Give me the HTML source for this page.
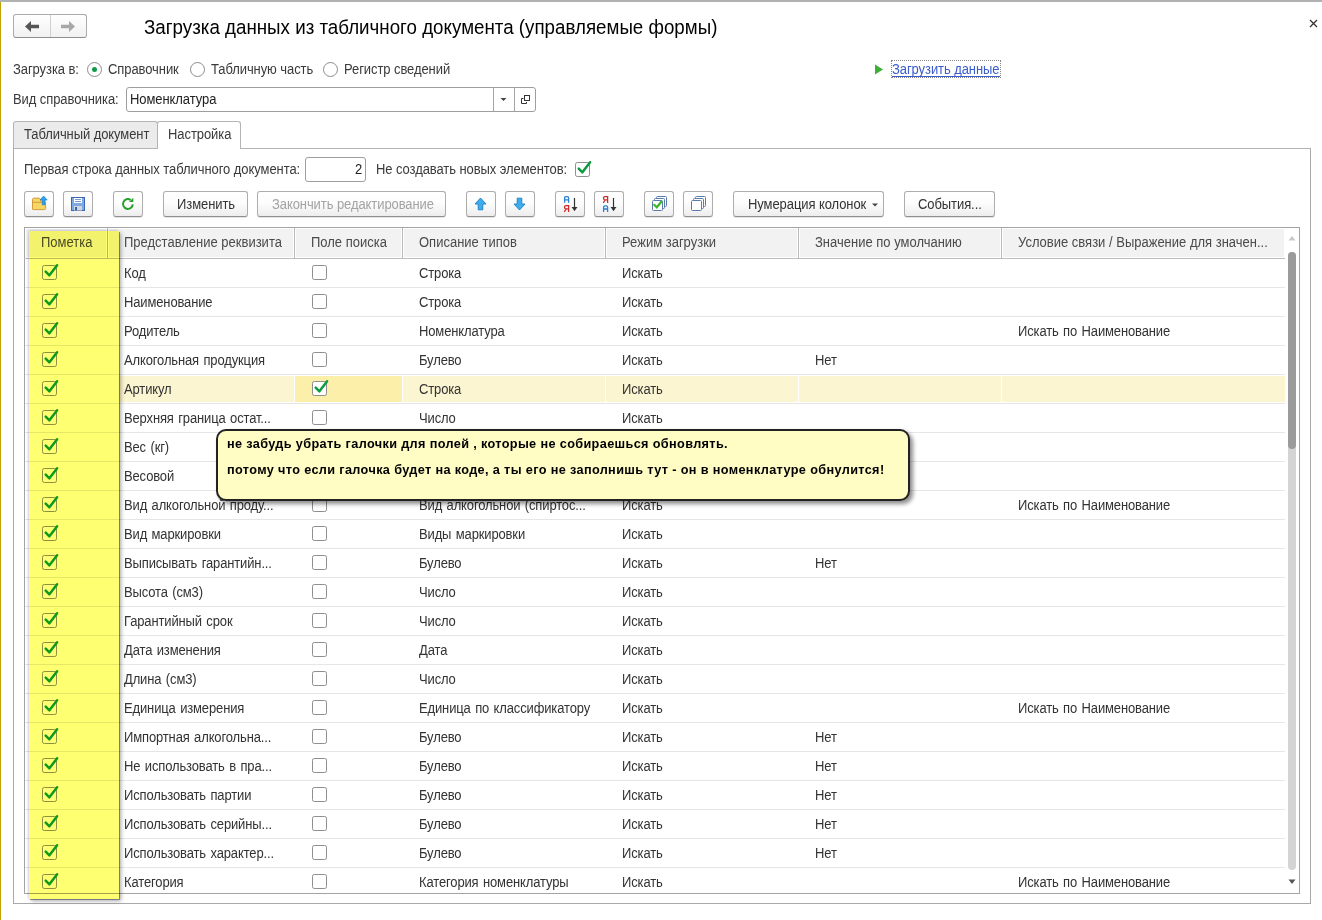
<!DOCTYPE html>
<html><head><meta charset="utf-8">
<style>
html,body{margin:0;padding:0;}
body{width:1322px;height:920px;position:relative;overflow:hidden;background:#fff;font-family:"Liberation Sans",sans-serif;font-size:13px;color:#333;}
.abs{position:absolute;}
.t{position:absolute;white-space:nowrap;line-height:15px;font-size:13px;color:#3a3a3a;letter-spacing:-0.08px;transform:scaleY(1.06);transform-origin:0 11px;}
.tt{letter-spacing:-0.14px;word-spacing:1px;color:#333;}
.hdt{color:#4a4a4a;letter-spacing:0;}
.btn{position:absolute;box-sizing:border-box;height:26px;top:191px;border:1px solid #adadad;border-bottom-color:#8e8e8e;border-radius:3px;background:linear-gradient(#ffffff 0%,#fdfdfd 45%,#ededed 100%);box-shadow:0 1px 0 rgba(0,0,0,0.1);}
.btn .bt{position:absolute;top:5px;white-space:nowrap;line-height:15px;font-size:13px;color:#333;letter-spacing:-0.08px;transform:scaleY(1.06);transform-origin:0 11px;}
.hc{position:absolute;top:228px;height:30px;box-sizing:border-box;background:#f2f2f2;border:1px solid #fff;}
.radio{position:absolute;width:15px;height:15px;box-sizing:border-box;border:1px solid #8c8c8c;border-radius:50%;background:#fff;}
</style></head>
<body>
<!-- top bar & left edge -->
<div class="abs" style="left:0;top:0;width:1322px;height:2px;background:#b0b1b3"></div>
<div class="abs" style="left:0;top:2px;width:1px;height:918px;background:#c0a200"></div>

<!-- nav buttons -->
<div class="abs" style="left:13px;top:14px;width:74px;height:24px;box-sizing:border-box;border:1px solid #ababab;border-bottom-color:#8e8e8e;border-radius:3px;background:linear-gradient(#fff,#f1f1f1);"></div>
<div class="abs" style="left:50px;top:15px;width:1px;height:22px;background:#cfcfcf"></div>
<svg class="abs" style="left:24px;top:20px" width="16" height="13" viewBox="0 0 16 13"><path d="M1 6.5 L7 1 V4.8 H15 V8.2 H7 V12 Z" fill="#555"/></svg>
<svg class="abs" style="left:60px;top:20px" width="16" height="13" viewBox="0 0 16 13"><path d="M15 6.5 L9 1 V4.8 H1 V8.2 H9 V12 Z" fill="#a8a8a8"/></svg>

<!-- title -->
<div class="t" style="left:144px;top:18px;font-size:18.75px;line-height:20px;color:#000;letter-spacing:0">Загрузка данных из табличного документа (управляемые формы)</div>

<!-- close -->
<svg class="abs" style="left:1309px;top:19px" width="9" height="9" viewBox="0 0 9 9"><path d="M1 1 L8 8 M8 1 L1 8" stroke="#333" stroke-width="1.3"/></svg>

<!-- radio line -->
<div class="t" style="left:13px;top:62px">Загрузка в:</div>
<div class="radio" style="left:87px;top:62px"></div>
<div class="abs" style="left:92px;top:67px;width:5px;height:5px;border-radius:50%;background:#109a48"></div>
<div class="t" style="left:108px;top:62px">Справочник</div>
<div class="radio" style="left:190px;top:62px"></div>
<div class="t" style="left:211px;top:62px">Табличную часть</div>
<div class="radio" style="left:323px;top:62px"></div>
<div class="t" style="left:344px;top:62px">Регистр сведений</div>

<!-- load data link -->
<svg class="abs" style="left:874px;top:64px" width="10" height="11" viewBox="0 0 10 11"><path d="M1 0.5 L9 5.5 L1 10.5 Z" fill="#3cb035"/></svg>
<div class="abs" style="left:891px;top:60px;width:110px;height:18px;box-sizing:border-box;border:1px dotted #888"></div>
<div class="t" style="left:892px;top:62px;color:#3a5ccc">Загрузить данные</div>
<div class="abs" style="left:892px;top:76px;width:108px;height:1px;background:#3a5ccc"></div>

<!-- Вид справочника -->
<div class="t" style="left:13px;top:92px">Вид справочника:</div>
<div class="abs" style="left:126px;top:87px;width:410px;height:25px;box-sizing:border-box;border:1px solid #9e9e9e;border-radius:3px;background:#fff"></div>
<div class="abs" style="left:493px;top:88px;width:1px;height:23px;background:#a4a4a4"></div>
<div class="abs" style="left:514px;top:88px;width:1px;height:23px;background:#a4a4a4"></div>
<div class="t" style="left:130px;top:92px;color:#222">Номенклатура</div>
<svg class="abs" style="left:500px;top:97px" width="7" height="5" viewBox="0 0 7 5"><path d="M0.5 1 H6.5 L3.5 4 Z" fill="#444"/></svg>
<svg class="abs" style="left:519px;top:93px" width="12" height="12" viewBox="0 0 12 12"><rect x="5.5" y="2.5" width="5" height="5" fill="none" stroke="#333"/><path d="M4.5 5.5 H2.5 V10.5 H7.5 V9" fill="none" stroke="#333"/></svg>

<!-- tabs -->
<div class="abs" style="left:13px;top:148px;width:1298px;height:756px;box-sizing:border-box;border:1px solid #a9a9a9;border-top-color:#b4b4b4"></div>
<div class="abs" style="left:13px;top:121px;width:145px;height:27px;box-sizing:border-box;border:1px solid #b4b4b4;border-bottom:none;border-radius:3px 3px 0 0;background:#ebebeb"></div>
<div class="abs" style="left:157px;top:121px;width:84px;height:28px;box-sizing:border-box;border:1px solid #b4b4b4;border-bottom:none;border-radius:3px 3px 0 0;background:#fff"></div>
<div class="t" style="left:24px;top:127px">Табличный документ</div>
<div class="t" style="left:168px;top:127px">Настройка</div>

<!-- first row settings -->
<div class="t" style="left:24px;top:162px;letter-spacing:-0.07px">Первая строка данных табличного документа:</div>
<div class="abs" style="left:305px;top:157px;width:61px;height:25px;box-sizing:border-box;border:1px solid #9e9e9e;border-radius:3px;background:#fff"></div>
<div class="t" style="left:355px;top:162px;color:#222">2</div>
<div class="t" style="left:376px;top:162px">Не создавать новых элементов:</div>
<div class="abs" style="left:575px;top:162px;width:15px;height:15px"><svg width="15" height="15" viewBox="0 0 15 15" style="overflow:visible;display:block"><rect x="0.5" y="0.5" width="14" height="14" rx="1.8" fill="#fff" stroke="#8f8f8f"/><path d="M3.7 6.6 L7.4 10.3 L15.1 0.3" fill="none" stroke="#0e9a40" stroke-width="2.5" stroke-linecap="round" stroke-linejoin="round"/></svg></div>

<!-- toolbar -->
<div class="btn" style="left:24px;width:30px"></div>
<svg class="abs" style="left:31px;top:195px" width="18" height="16" viewBox="0 0 18 16"><path d="M1.5 14.3 V4.6 Q1.5 3.1 3 3.1 H7.6 Q9 3.1 9.6 4.6 L10.2 7.2 H14.6 V13.6 Q14.6 14.6 13.6 14.6 H2.3 Q1.5 14.6 1.5 14.3 Z" fill="#f8d662" stroke="#d39b3c"/><path d="M1.5 7.3 H10.5" stroke="#d39b3c"/><path d="M12.6 1 L16.2 5 H14 V9.8 H11.3 V5 H9 Z" fill="#2ea2ea" stroke="#1e7ec6" stroke-width="0.7" stroke-linejoin="round"/></svg>
<div class="btn" style="left:63px;width:30px"></div>
<svg class="abs" style="left:71px;top:197px" width="14" height="14" viewBox="0 0 14 14"><rect x="0.5" y="0.5" width="13" height="13" fill="#7eaae4" stroke="#3b68b0"/><rect x="3" y="1" width="8" height="5" fill="#fff"/><path d="M4 2.5 H10 M4 4.5 H10" stroke="#5a7fc0" stroke-width="0.8"/><rect x="3" y="9" width="8" height="4.5" fill="#cfd6de"/><rect x="4" y="10" width="2" height="3.5" fill="#3864a8"/></svg>
<div class="btn" style="left:113px;width:30px"></div>
<svg class="abs" style="left:120px;top:196px" width="16" height="16" viewBox="0 0 16 16"><path d="M12.8 8.4 A4.9 4.9 0 1 1 10.6 3.9" fill="none" stroke="#23a12a" stroke-width="2"/><path d="M13.3 1.8 V6.1 H9 Z" fill="#23a12a"/></svg>
<div class="btn" style="left:163px;width:85px"><div class="bt" style="left:13px">Изменить</div></div>
<div class="btn" style="left:257px;width:189px"><div class="bt" style="left:14px;color:#a3a3a3">Закончить редактирование</div></div>
<div class="btn" style="left:466px;width:30px"></div>
<svg class="abs" style="left:474px;top:197px" width="13" height="14" viewBox="0 0 13 14"><path d="M6.5 1 L12 7 H8.8 V12.8 H4.2 V7 H1 Z" fill="#3eaced" stroke="#1a7fc4" stroke-width="0.9"/></svg>
<div class="btn" style="left:505px;width:30px"></div>
<svg class="abs" style="left:513px;top:197px" width="13" height="14" viewBox="0 0 13 14"><path d="M6.5 13 L12 7 H8.8 V1.2 H4.2 V7 H1 Z" fill="#3eaced" stroke="#1a7fc4" stroke-width="0.9"/></svg>
<div class="btn" style="left:555px;width:30px"></div>
<svg class="abs" style="left:562px;top:195px" width="18" height="18" viewBox="0 0 18 18"><path d="M2.6 7.8 V3.3 Q2.6 1.6 4 1.6 H5.2 Q6.6 1.6 6.6 3.3 V7.8 M2.6 4.9 H6.6" fill="none" stroke="#2a80d2" stroke-width="1.3"/><path d="M6.6 17 V10.6 H4 Q2.6 10.6 2.6 12 V12.4 Q2.6 13.9 4 13.9 H6.6 M4.3 13.9 L2.2 16.8" fill="none" stroke="#cf2b2b" stroke-width="1.3"/><path d="M12.5 3 V15.5" stroke="#333" stroke-width="1.2"/><path d="M9.5 12 H15.5 L12.5 16 Z" fill="#333"/></svg>
<div class="btn" style="left:594px;width:30px"></div>
<svg class="abs" style="left:601px;top:195px" width="18" height="18" viewBox="0 0 18 18"><path d="M2.6 17 V12.5 Q2.6 10.8 4 10.8 H5.2 Q6.6 10.8 6.6 12.5 V17 M2.6 14 H6.6" fill="none" stroke="#2a80d2" stroke-width="1.3"/><path d="M6.6 8 V1.6 H4 Q2.6 1.6 2.6 3 V3.4 Q2.6 4.9 4 4.9 H6.6 M4.3 4.9 L2.2 7.8" fill="none" stroke="#cf2b2b" stroke-width="1.3"/><path d="M12.5 3 V15.5" stroke="#333" stroke-width="1.2"/><path d="M9.5 12 H15.5 L12.5 16 Z" fill="#333"/></svg>
<div class="btn" style="left:644px;width:30px"></div>
<svg class="abs" style="left:651px;top:195px" width="18" height="17" viewBox="0 0 18 17"><rect x="5.5" y="1.5" width="10" height="10" rx="1" fill="#fff" stroke="#5a7caa"/><rect x="3.5" y="3.5" width="10" height="10" rx="1" fill="#fff" stroke="#5a7caa"/><rect x="1.5" y="5.5" width="10" height="10" rx="1" fill="#fff" stroke="#5a7caa"/><path d="M3.2 9.8 L5.8 12.3 L10.5 6.5" fill="none" stroke="#3fb52a" stroke-width="2.2" stroke-linecap="round"/></svg>
<div class="btn" style="left:683px;width:30px"></div>
<svg class="abs" style="left:690px;top:195px" width="18" height="17" viewBox="0 0 18 17"><rect x="5.5" y="1.5" width="10" height="10" rx="1" fill="#fff" stroke="#5a7caa"/><rect x="3.5" y="3.5" width="10" height="10" rx="1" fill="#fff" stroke="#5a7caa"/><rect x="1.5" y="5.5" width="10" height="10" rx="1" fill="#fff" stroke="#5a7caa"/></svg>
<div class="btn" style="left:733px;width:151px"><div class="bt" style="left:14px">Нумерация колонок</div><svg class="abs" style="left:138px;top:11px" width="6" height="4" viewBox="0 0 6 4"><path d="M0 0.5 H6 L3 3.5 Z" fill="#444"/></svg></div>
<div class="btn" style="left:904px;width:91px"><div class="bt" style="left:13px">События...</div></div>

<!-- table -->
<div class="abs" style="left:24px;top:227px;width:1276px;height:667px;box-sizing:border-box;border:1px solid #a4a4a4;overflow:hidden"></div>
<div class="abs" style="left:25px;top:228px;width:1274px;height:665px;overflow:hidden">
<div class="abs" style="left:-25px;top:-228px;width:1322px;height:920px">
<div class="hc" style="left:25px;width:82px"></div>
<div class="t hdt" style="left:41px;top:235px">Пометка</div>
<div class="hc" style="left:108px;width:186px"></div>
<div class="t hdt" style="left:124px;top:235px">Представление реквизита</div>
<div class="hc" style="left:295px;width:107px"></div>
<div class="t hdt" style="left:311px;top:235px">Поле поиска</div>
<div class="hc" style="left:403px;width:202px"></div>
<div class="t hdt" style="left:419px;top:235px">Описание типов</div>
<div class="hc" style="left:606px;width:192px"></div>
<div class="t hdt" style="left:622px;top:235px">Режим загрузки</div>
<div class="hc" style="left:799px;width:202px"></div>
<div class="t hdt" style="left:815px;top:235px">Значение по умолчанию</div>
<div class="hc" style="left:1002px;width:283px"></div>
<div class="t hdt" style="left:1018px;top:235px">Условие связи / Выражение для значен...</div>
<div class="abs" style="left:107px;top:228px;width:1px;height:30px;background:#b9b9b9"></div>
<div class="abs" style="left:294px;top:228px;width:1px;height:30px;background:#b9b9b9"></div>
<div class="abs" style="left:402px;top:228px;width:1px;height:30px;background:#b9b9b9"></div>
<div class="abs" style="left:605px;top:228px;width:1px;height:30px;background:#b9b9b9"></div>
<div class="abs" style="left:798px;top:228px;width:1px;height:30px;background:#b9b9b9"></div>
<div class="abs" style="left:1001px;top:228px;width:1px;height:30px;background:#b9b9b9"></div>
<div class="abs" style="left:25px;top:287px;width:1260px;height:1px;background:#e6e6e6"></div>
<div class="abs" style="left:42px;top:265px;width:15px;height:15px"><svg width="15" height="15" viewBox="0 0 15 15" style="overflow:visible;display:block"><rect x="0.5" y="0.5" width="14" height="14" rx="1.8" fill="#fff" stroke="#8f8f8f"/><path d="M3.7 6.6 L7.4 10.3 L15.1 0.3" fill="none" stroke="#0e9a40" stroke-width="2.5" stroke-linecap="round" stroke-linejoin="round"/></svg></div>
<div class="abs" style="left:312px;top:265px;width:15px;height:15px"><svg width="15" height="15" viewBox="0 0 15 15" style="display:block"><rect x="0.5" y="0.5" width="14" height="14" rx="1.8" fill="#fff" stroke="#8f8f8f"/></svg></div>
<div class="t tt" style="left:124px;top:266px">Код</div>
<div class="t tt" style="left:419px;top:266px">Строка</div>
<div class="t tt" style="left:622px;top:266px">Искать</div>
<div class="abs" style="left:25px;top:316px;width:1260px;height:1px;background:#e6e6e6"></div>
<div class="abs" style="left:42px;top:294px;width:15px;height:15px"><svg width="15" height="15" viewBox="0 0 15 15" style="overflow:visible;display:block"><rect x="0.5" y="0.5" width="14" height="14" rx="1.8" fill="#fff" stroke="#8f8f8f"/><path d="M3.7 6.6 L7.4 10.3 L15.1 0.3" fill="none" stroke="#0e9a40" stroke-width="2.5" stroke-linecap="round" stroke-linejoin="round"/></svg></div>
<div class="abs" style="left:312px;top:294px;width:15px;height:15px"><svg width="15" height="15" viewBox="0 0 15 15" style="display:block"><rect x="0.5" y="0.5" width="14" height="14" rx="1.8" fill="#fff" stroke="#8f8f8f"/></svg></div>
<div class="t tt" style="left:124px;top:295px">Наименование</div>
<div class="t tt" style="left:419px;top:295px">Строка</div>
<div class="t tt" style="left:622px;top:295px">Искать</div>
<div class="abs" style="left:25px;top:345px;width:1260px;height:1px;background:#e6e6e6"></div>
<div class="abs" style="left:42px;top:323px;width:15px;height:15px"><svg width="15" height="15" viewBox="0 0 15 15" style="overflow:visible;display:block"><rect x="0.5" y="0.5" width="14" height="14" rx="1.8" fill="#fff" stroke="#8f8f8f"/><path d="M3.7 6.6 L7.4 10.3 L15.1 0.3" fill="none" stroke="#0e9a40" stroke-width="2.5" stroke-linecap="round" stroke-linejoin="round"/></svg></div>
<div class="abs" style="left:312px;top:323px;width:15px;height:15px"><svg width="15" height="15" viewBox="0 0 15 15" style="display:block"><rect x="0.5" y="0.5" width="14" height="14" rx="1.8" fill="#fff" stroke="#8f8f8f"/></svg></div>
<div class="t tt" style="left:124px;top:324px">Родитель</div>
<div class="t tt" style="left:419px;top:324px">Номенклатура</div>
<div class="t tt" style="left:622px;top:324px">Искать</div>
<div class="t tt" style="left:1018px;top:324px">Искать по Наименование</div>
<div class="abs" style="left:25px;top:374px;width:1260px;height:1px;background:#e6e6e6"></div>
<div class="abs" style="left:42px;top:352px;width:15px;height:15px"><svg width="15" height="15" viewBox="0 0 15 15" style="overflow:visible;display:block"><rect x="0.5" y="0.5" width="14" height="14" rx="1.8" fill="#fff" stroke="#8f8f8f"/><path d="M3.7 6.6 L7.4 10.3 L15.1 0.3" fill="none" stroke="#0e9a40" stroke-width="2.5" stroke-linecap="round" stroke-linejoin="round"/></svg></div>
<div class="abs" style="left:312px;top:352px;width:15px;height:15px"><svg width="15" height="15" viewBox="0 0 15 15" style="display:block"><rect x="0.5" y="0.5" width="14" height="14" rx="1.8" fill="#fff" stroke="#8f8f8f"/></svg></div>
<div class="t tt" style="left:124px;top:353px">Алкогольная продукция</div>
<div class="t tt" style="left:419px;top:353px">Булево</div>
<div class="t tt" style="left:622px;top:353px">Искать</div>
<div class="t tt" style="left:815px;top:353px">Нет</div>
<div class="abs" style="left:119px;top:376px;width:175px;height:26px;background:#fcf5d1"></div>
<div class="abs" style="left:295px;top:376px;width:107px;height:26px;background:#fcefa9"></div>
<div class="abs" style="left:403px;top:376px;width:202px;height:26px;background:#fcf5d1"></div>
<div class="abs" style="left:606px;top:376px;width:192px;height:26px;background:#fcf5d1"></div>
<div class="abs" style="left:799px;top:376px;width:202px;height:26px;background:#fcf5d1"></div>
<div class="abs" style="left:1002px;top:376px;width:283px;height:26px;background:#fcf5d1"></div>
<div class="abs" style="left:25px;top:403px;width:1260px;height:1px;background:#e6e6e6"></div>
<div class="abs" style="left:42px;top:381px;width:15px;height:15px"><svg width="15" height="15" viewBox="0 0 15 15" style="overflow:visible;display:block"><rect x="0.5" y="0.5" width="14" height="14" rx="1.8" fill="#fff" stroke="#8f8f8f"/><path d="M3.7 6.6 L7.4 10.3 L15.1 0.3" fill="none" stroke="#0e9a40" stroke-width="2.5" stroke-linecap="round" stroke-linejoin="round"/></svg></div>
<div class="abs" style="left:312px;top:381px;width:15px;height:15px"><svg width="15" height="15" viewBox="0 0 15 15" style="overflow:visible;display:block"><rect x="0.5" y="0.5" width="14" height="14" rx="1.8" fill="#fff" stroke="#8f8f8f"/><path d="M3.7 6.6 L7.4 10.3 L15.1 0.3" fill="none" stroke="#0e9a40" stroke-width="2.5" stroke-linecap="round" stroke-linejoin="round"/></svg></div>
<div class="t tt" style="left:124px;top:382px">Артикул</div>
<div class="t tt" style="left:419px;top:382px">Строка</div>
<div class="t tt" style="left:622px;top:382px">Искать</div>
<div class="abs" style="left:25px;top:432px;width:1260px;height:1px;background:#e6e6e6"></div>
<div class="abs" style="left:42px;top:410px;width:15px;height:15px"><svg width="15" height="15" viewBox="0 0 15 15" style="overflow:visible;display:block"><rect x="0.5" y="0.5" width="14" height="14" rx="1.8" fill="#fff" stroke="#8f8f8f"/><path d="M3.7 6.6 L7.4 10.3 L15.1 0.3" fill="none" stroke="#0e9a40" stroke-width="2.5" stroke-linecap="round" stroke-linejoin="round"/></svg></div>
<div class="abs" style="left:312px;top:410px;width:15px;height:15px"><svg width="15" height="15" viewBox="0 0 15 15" style="display:block"><rect x="0.5" y="0.5" width="14" height="14" rx="1.8" fill="#fff" stroke="#8f8f8f"/></svg></div>
<div class="t tt" style="left:124px;top:411px">Верхняя граница остат...</div>
<div class="t tt" style="left:419px;top:411px">Число</div>
<div class="t tt" style="left:622px;top:411px">Искать</div>
<div class="abs" style="left:25px;top:461px;width:1260px;height:1px;background:#e6e6e6"></div>
<div class="abs" style="left:42px;top:439px;width:15px;height:15px"><svg width="15" height="15" viewBox="0 0 15 15" style="overflow:visible;display:block"><rect x="0.5" y="0.5" width="14" height="14" rx="1.8" fill="#fff" stroke="#8f8f8f"/><path d="M3.7 6.6 L7.4 10.3 L15.1 0.3" fill="none" stroke="#0e9a40" stroke-width="2.5" stroke-linecap="round" stroke-linejoin="round"/></svg></div>
<div class="abs" style="left:312px;top:439px;width:15px;height:15px"><svg width="15" height="15" viewBox="0 0 15 15" style="display:block"><rect x="0.5" y="0.5" width="14" height="14" rx="1.8" fill="#fff" stroke="#8f8f8f"/></svg></div>
<div class="t tt" style="left:124px;top:440px">Вес (кг)</div>
<div class="t tt" style="left:419px;top:440px">Число</div>
<div class="t tt" style="left:622px;top:440px">Искать</div>
<div class="abs" style="left:25px;top:490px;width:1260px;height:1px;background:#e6e6e6"></div>
<div class="abs" style="left:42px;top:468px;width:15px;height:15px"><svg width="15" height="15" viewBox="0 0 15 15" style="overflow:visible;display:block"><rect x="0.5" y="0.5" width="14" height="14" rx="1.8" fill="#fff" stroke="#8f8f8f"/><path d="M3.7 6.6 L7.4 10.3 L15.1 0.3" fill="none" stroke="#0e9a40" stroke-width="2.5" stroke-linecap="round" stroke-linejoin="round"/></svg></div>
<div class="abs" style="left:312px;top:468px;width:15px;height:15px"><svg width="15" height="15" viewBox="0 0 15 15" style="display:block"><rect x="0.5" y="0.5" width="14" height="14" rx="1.8" fill="#fff" stroke="#8f8f8f"/></svg></div>
<div class="t tt" style="left:124px;top:469px">Весовой</div>
<div class="t tt" style="left:419px;top:469px">Булево</div>
<div class="t tt" style="left:622px;top:469px">Искать</div>
<div class="t tt" style="left:815px;top:469px">Нет</div>
<div class="abs" style="left:25px;top:519px;width:1260px;height:1px;background:#e6e6e6"></div>
<div class="abs" style="left:42px;top:497px;width:15px;height:15px"><svg width="15" height="15" viewBox="0 0 15 15" style="overflow:visible;display:block"><rect x="0.5" y="0.5" width="14" height="14" rx="1.8" fill="#fff" stroke="#8f8f8f"/><path d="M3.7 6.6 L7.4 10.3 L15.1 0.3" fill="none" stroke="#0e9a40" stroke-width="2.5" stroke-linecap="round" stroke-linejoin="round"/></svg></div>
<div class="abs" style="left:312px;top:497px;width:15px;height:15px"><svg width="15" height="15" viewBox="0 0 15 15" style="display:block"><rect x="0.5" y="0.5" width="14" height="14" rx="1.8" fill="#fff" stroke="#8f8f8f"/></svg></div>
<div class="t tt" style="left:124px;top:498px">Вид алкогольной проду...</div>
<div class="t tt" style="left:419px;top:498px">Вид алкогольной (спиртос...</div>
<div class="t tt" style="left:622px;top:498px">Искать</div>
<div class="t tt" style="left:1018px;top:498px">Искать по Наименование</div>
<div class="abs" style="left:25px;top:548px;width:1260px;height:1px;background:#e6e6e6"></div>
<div class="abs" style="left:42px;top:526px;width:15px;height:15px"><svg width="15" height="15" viewBox="0 0 15 15" style="overflow:visible;display:block"><rect x="0.5" y="0.5" width="14" height="14" rx="1.8" fill="#fff" stroke="#8f8f8f"/><path d="M3.7 6.6 L7.4 10.3 L15.1 0.3" fill="none" stroke="#0e9a40" stroke-width="2.5" stroke-linecap="round" stroke-linejoin="round"/></svg></div>
<div class="abs" style="left:312px;top:526px;width:15px;height:15px"><svg width="15" height="15" viewBox="0 0 15 15" style="display:block"><rect x="0.5" y="0.5" width="14" height="14" rx="1.8" fill="#fff" stroke="#8f8f8f"/></svg></div>
<div class="t tt" style="left:124px;top:527px">Вид маркировки</div>
<div class="t tt" style="left:419px;top:527px">Виды маркировки</div>
<div class="t tt" style="left:622px;top:527px">Искать</div>
<div class="abs" style="left:25px;top:577px;width:1260px;height:1px;background:#e6e6e6"></div>
<div class="abs" style="left:42px;top:555px;width:15px;height:15px"><svg width="15" height="15" viewBox="0 0 15 15" style="overflow:visible;display:block"><rect x="0.5" y="0.5" width="14" height="14" rx="1.8" fill="#fff" stroke="#8f8f8f"/><path d="M3.7 6.6 L7.4 10.3 L15.1 0.3" fill="none" stroke="#0e9a40" stroke-width="2.5" stroke-linecap="round" stroke-linejoin="round"/></svg></div>
<div class="abs" style="left:312px;top:555px;width:15px;height:15px"><svg width="15" height="15" viewBox="0 0 15 15" style="display:block"><rect x="0.5" y="0.5" width="14" height="14" rx="1.8" fill="#fff" stroke="#8f8f8f"/></svg></div>
<div class="t tt" style="left:124px;top:556px">Выписывать гарантийн...</div>
<div class="t tt" style="left:419px;top:556px">Булево</div>
<div class="t tt" style="left:622px;top:556px">Искать</div>
<div class="t tt" style="left:815px;top:556px">Нет</div>
<div class="abs" style="left:25px;top:606px;width:1260px;height:1px;background:#e6e6e6"></div>
<div class="abs" style="left:42px;top:584px;width:15px;height:15px"><svg width="15" height="15" viewBox="0 0 15 15" style="overflow:visible;display:block"><rect x="0.5" y="0.5" width="14" height="14" rx="1.8" fill="#fff" stroke="#8f8f8f"/><path d="M3.7 6.6 L7.4 10.3 L15.1 0.3" fill="none" stroke="#0e9a40" stroke-width="2.5" stroke-linecap="round" stroke-linejoin="round"/></svg></div>
<div class="abs" style="left:312px;top:584px;width:15px;height:15px"><svg width="15" height="15" viewBox="0 0 15 15" style="display:block"><rect x="0.5" y="0.5" width="14" height="14" rx="1.8" fill="#fff" stroke="#8f8f8f"/></svg></div>
<div class="t tt" style="left:124px;top:585px">Высота (см3)</div>
<div class="t tt" style="left:419px;top:585px">Число</div>
<div class="t tt" style="left:622px;top:585px">Искать</div>
<div class="abs" style="left:25px;top:635px;width:1260px;height:1px;background:#e6e6e6"></div>
<div class="abs" style="left:42px;top:613px;width:15px;height:15px"><svg width="15" height="15" viewBox="0 0 15 15" style="overflow:visible;display:block"><rect x="0.5" y="0.5" width="14" height="14" rx="1.8" fill="#fff" stroke="#8f8f8f"/><path d="M3.7 6.6 L7.4 10.3 L15.1 0.3" fill="none" stroke="#0e9a40" stroke-width="2.5" stroke-linecap="round" stroke-linejoin="round"/></svg></div>
<div class="abs" style="left:312px;top:613px;width:15px;height:15px"><svg width="15" height="15" viewBox="0 0 15 15" style="display:block"><rect x="0.5" y="0.5" width="14" height="14" rx="1.8" fill="#fff" stroke="#8f8f8f"/></svg></div>
<div class="t tt" style="left:124px;top:614px">Гарантийный срок</div>
<div class="t tt" style="left:419px;top:614px">Число</div>
<div class="t tt" style="left:622px;top:614px">Искать</div>
<div class="abs" style="left:25px;top:664px;width:1260px;height:1px;background:#e6e6e6"></div>
<div class="abs" style="left:42px;top:642px;width:15px;height:15px"><svg width="15" height="15" viewBox="0 0 15 15" style="overflow:visible;display:block"><rect x="0.5" y="0.5" width="14" height="14" rx="1.8" fill="#fff" stroke="#8f8f8f"/><path d="M3.7 6.6 L7.4 10.3 L15.1 0.3" fill="none" stroke="#0e9a40" stroke-width="2.5" stroke-linecap="round" stroke-linejoin="round"/></svg></div>
<div class="abs" style="left:312px;top:642px;width:15px;height:15px"><svg width="15" height="15" viewBox="0 0 15 15" style="display:block"><rect x="0.5" y="0.5" width="14" height="14" rx="1.8" fill="#fff" stroke="#8f8f8f"/></svg></div>
<div class="t tt" style="left:124px;top:643px">Дата изменения</div>
<div class="t tt" style="left:419px;top:643px">Дата</div>
<div class="t tt" style="left:622px;top:643px">Искать</div>
<div class="abs" style="left:25px;top:693px;width:1260px;height:1px;background:#e6e6e6"></div>
<div class="abs" style="left:42px;top:671px;width:15px;height:15px"><svg width="15" height="15" viewBox="0 0 15 15" style="overflow:visible;display:block"><rect x="0.5" y="0.5" width="14" height="14" rx="1.8" fill="#fff" stroke="#8f8f8f"/><path d="M3.7 6.6 L7.4 10.3 L15.1 0.3" fill="none" stroke="#0e9a40" stroke-width="2.5" stroke-linecap="round" stroke-linejoin="round"/></svg></div>
<div class="abs" style="left:312px;top:671px;width:15px;height:15px"><svg width="15" height="15" viewBox="0 0 15 15" style="display:block"><rect x="0.5" y="0.5" width="14" height="14" rx="1.8" fill="#fff" stroke="#8f8f8f"/></svg></div>
<div class="t tt" style="left:124px;top:672px">Длина (см3)</div>
<div class="t tt" style="left:419px;top:672px">Число</div>
<div class="t tt" style="left:622px;top:672px">Искать</div>
<div class="abs" style="left:25px;top:722px;width:1260px;height:1px;background:#e6e6e6"></div>
<div class="abs" style="left:42px;top:700px;width:15px;height:15px"><svg width="15" height="15" viewBox="0 0 15 15" style="overflow:visible;display:block"><rect x="0.5" y="0.5" width="14" height="14" rx="1.8" fill="#fff" stroke="#8f8f8f"/><path d="M3.7 6.6 L7.4 10.3 L15.1 0.3" fill="none" stroke="#0e9a40" stroke-width="2.5" stroke-linecap="round" stroke-linejoin="round"/></svg></div>
<div class="abs" style="left:312px;top:700px;width:15px;height:15px"><svg width="15" height="15" viewBox="0 0 15 15" style="display:block"><rect x="0.5" y="0.5" width="14" height="14" rx="1.8" fill="#fff" stroke="#8f8f8f"/></svg></div>
<div class="t tt" style="left:124px;top:701px">Единица измерения</div>
<div class="t tt" style="left:419px;top:701px">Единица по классификатору</div>
<div class="t tt" style="left:622px;top:701px">Искать</div>
<div class="t tt" style="left:1018px;top:701px">Искать по Наименование</div>
<div class="abs" style="left:25px;top:751px;width:1260px;height:1px;background:#e6e6e6"></div>
<div class="abs" style="left:42px;top:729px;width:15px;height:15px"><svg width="15" height="15" viewBox="0 0 15 15" style="overflow:visible;display:block"><rect x="0.5" y="0.5" width="14" height="14" rx="1.8" fill="#fff" stroke="#8f8f8f"/><path d="M3.7 6.6 L7.4 10.3 L15.1 0.3" fill="none" stroke="#0e9a40" stroke-width="2.5" stroke-linecap="round" stroke-linejoin="round"/></svg></div>
<div class="abs" style="left:312px;top:729px;width:15px;height:15px"><svg width="15" height="15" viewBox="0 0 15 15" style="display:block"><rect x="0.5" y="0.5" width="14" height="14" rx="1.8" fill="#fff" stroke="#8f8f8f"/></svg></div>
<div class="t tt" style="left:124px;top:730px">Импортная алкогольна...</div>
<div class="t tt" style="left:419px;top:730px">Булево</div>
<div class="t tt" style="left:622px;top:730px">Искать</div>
<div class="t tt" style="left:815px;top:730px">Нет</div>
<div class="abs" style="left:25px;top:780px;width:1260px;height:1px;background:#e6e6e6"></div>
<div class="abs" style="left:42px;top:758px;width:15px;height:15px"><svg width="15" height="15" viewBox="0 0 15 15" style="overflow:visible;display:block"><rect x="0.5" y="0.5" width="14" height="14" rx="1.8" fill="#fff" stroke="#8f8f8f"/><path d="M3.7 6.6 L7.4 10.3 L15.1 0.3" fill="none" stroke="#0e9a40" stroke-width="2.5" stroke-linecap="round" stroke-linejoin="round"/></svg></div>
<div class="abs" style="left:312px;top:758px;width:15px;height:15px"><svg width="15" height="15" viewBox="0 0 15 15" style="display:block"><rect x="0.5" y="0.5" width="14" height="14" rx="1.8" fill="#fff" stroke="#8f8f8f"/></svg></div>
<div class="t tt" style="left:124px;top:759px">Не использовать в пра...</div>
<div class="t tt" style="left:419px;top:759px">Булево</div>
<div class="t tt" style="left:622px;top:759px">Искать</div>
<div class="t tt" style="left:815px;top:759px">Нет</div>
<div class="abs" style="left:25px;top:809px;width:1260px;height:1px;background:#e6e6e6"></div>
<div class="abs" style="left:42px;top:787px;width:15px;height:15px"><svg width="15" height="15" viewBox="0 0 15 15" style="overflow:visible;display:block"><rect x="0.5" y="0.5" width="14" height="14" rx="1.8" fill="#fff" stroke="#8f8f8f"/><path d="M3.7 6.6 L7.4 10.3 L15.1 0.3" fill="none" stroke="#0e9a40" stroke-width="2.5" stroke-linecap="round" stroke-linejoin="round"/></svg></div>
<div class="abs" style="left:312px;top:787px;width:15px;height:15px"><svg width="15" height="15" viewBox="0 0 15 15" style="display:block"><rect x="0.5" y="0.5" width="14" height="14" rx="1.8" fill="#fff" stroke="#8f8f8f"/></svg></div>
<div class="t tt" style="left:124px;top:788px">Использовать партии</div>
<div class="t tt" style="left:419px;top:788px">Булево</div>
<div class="t tt" style="left:622px;top:788px">Искать</div>
<div class="t tt" style="left:815px;top:788px">Нет</div>
<div class="abs" style="left:25px;top:838px;width:1260px;height:1px;background:#e6e6e6"></div>
<div class="abs" style="left:42px;top:816px;width:15px;height:15px"><svg width="15" height="15" viewBox="0 0 15 15" style="overflow:visible;display:block"><rect x="0.5" y="0.5" width="14" height="14" rx="1.8" fill="#fff" stroke="#8f8f8f"/><path d="M3.7 6.6 L7.4 10.3 L15.1 0.3" fill="none" stroke="#0e9a40" stroke-width="2.5" stroke-linecap="round" stroke-linejoin="round"/></svg></div>
<div class="abs" style="left:312px;top:816px;width:15px;height:15px"><svg width="15" height="15" viewBox="0 0 15 15" style="display:block"><rect x="0.5" y="0.5" width="14" height="14" rx="1.8" fill="#fff" stroke="#8f8f8f"/></svg></div>
<div class="t tt" style="left:124px;top:817px">Использовать серийны...</div>
<div class="t tt" style="left:419px;top:817px">Булево</div>
<div class="t tt" style="left:622px;top:817px">Искать</div>
<div class="t tt" style="left:815px;top:817px">Нет</div>
<div class="abs" style="left:25px;top:867px;width:1260px;height:1px;background:#e6e6e6"></div>
<div class="abs" style="left:42px;top:845px;width:15px;height:15px"><svg width="15" height="15" viewBox="0 0 15 15" style="overflow:visible;display:block"><rect x="0.5" y="0.5" width="14" height="14" rx="1.8" fill="#fff" stroke="#8f8f8f"/><path d="M3.7 6.6 L7.4 10.3 L15.1 0.3" fill="none" stroke="#0e9a40" stroke-width="2.5" stroke-linecap="round" stroke-linejoin="round"/></svg></div>
<div class="abs" style="left:312px;top:845px;width:15px;height:15px"><svg width="15" height="15" viewBox="0 0 15 15" style="display:block"><rect x="0.5" y="0.5" width="14" height="14" rx="1.8" fill="#fff" stroke="#8f8f8f"/></svg></div>
<div class="t tt" style="left:124px;top:846px">Использовать характер...</div>
<div class="t tt" style="left:419px;top:846px">Булево</div>
<div class="t tt" style="left:622px;top:846px">Искать</div>
<div class="t tt" style="left:815px;top:846px">Нет</div>
<div class="abs" style="left:25px;top:896px;width:1260px;height:1px;background:#e6e6e6"></div>
<div class="abs" style="left:42px;top:874px;width:15px;height:15px"><svg width="15" height="15" viewBox="0 0 15 15" style="overflow:visible;display:block"><rect x="0.5" y="0.5" width="14" height="14" rx="1.8" fill="#fff" stroke="#8f8f8f"/><path d="M3.7 6.6 L7.4 10.3 L15.1 0.3" fill="none" stroke="#0e9a40" stroke-width="2.5" stroke-linecap="round" stroke-linejoin="round"/></svg></div>
<div class="abs" style="left:312px;top:874px;width:15px;height:15px"><svg width="15" height="15" viewBox="0 0 15 15" style="display:block"><rect x="0.5" y="0.5" width="14" height="14" rx="1.8" fill="#fff" stroke="#8f8f8f"/></svg></div>
<div class="t tt" style="left:124px;top:875px">Категория</div>
<div class="t tt" style="left:419px;top:875px">Категория номенклатуры</div>
<div class="t tt" style="left:622px;top:875px">Искать</div>
<div class="t tt" style="left:1018px;top:875px">Искать по Наименование</div>
</div>
</div>
<div class="abs" style="left:24px;top:258px;width:1261px;height:1px;background:#bdbdbd"></div>

<!-- scrollbar -->
<svg class="abs" style="left:1288px;top:235px" width="8" height="6" viewBox="0 0 8 6"><path d="M0.5 5.5 H7.5 L4 1 Z" fill="#c8c8c8"/></svg>
<div class="abs" style="left:1288px;top:252px;width:8px;height:618px;border-radius:4px;background:#d4d4d4"></div>
<div class="abs" style="left:1288px;top:252px;width:8px;height:197px;border-radius:4px;background:#9b9b9b"></div>
<svg class="abs" style="left:1288px;top:879px" width="8" height="6" viewBox="0 0 8 6"><path d="M0.5 0.5 H7.5 L4 5 Z" fill="#555"/></svg>

<!-- yellow marker -->
<div class="abs" style="left:29px;top:231px;width:90px;height:668px;background:rgba(255,255,60,0.72);box-shadow:1px 1px 0 rgba(70,70,100,0.55),2px 2px 4px rgba(0,0,0,0.35),-1px -1px 2px rgba(80,80,140,0.2);mix-blend-mode:multiply"></div>

<!-- callout -->
<div class="abs" style="left:216px;top:429px;width:694px;height:72px;box-sizing:border-box;border:2px solid #222;border-radius:10px;background:#fffcc4;box-shadow:3px 3px 4px rgba(0,0,0,0.45)"></div>
<div class="t" style="left:227px;top:437px;font-weight:bold;font-size:12.7px;letter-spacing:0.36px;color:#000;transform:none">не забудь убрать галочки для полей , которые не собираешься обновлять.</div>
<div class="t" style="left:227px;top:463px;font-weight:bold;font-size:12.7px;letter-spacing:0.36px;color:#000;transform:none">потому что если галочка будет на коде, а ты его не заполнишь тут - он в номенклатуре обнулится!</div>
</body></html>
